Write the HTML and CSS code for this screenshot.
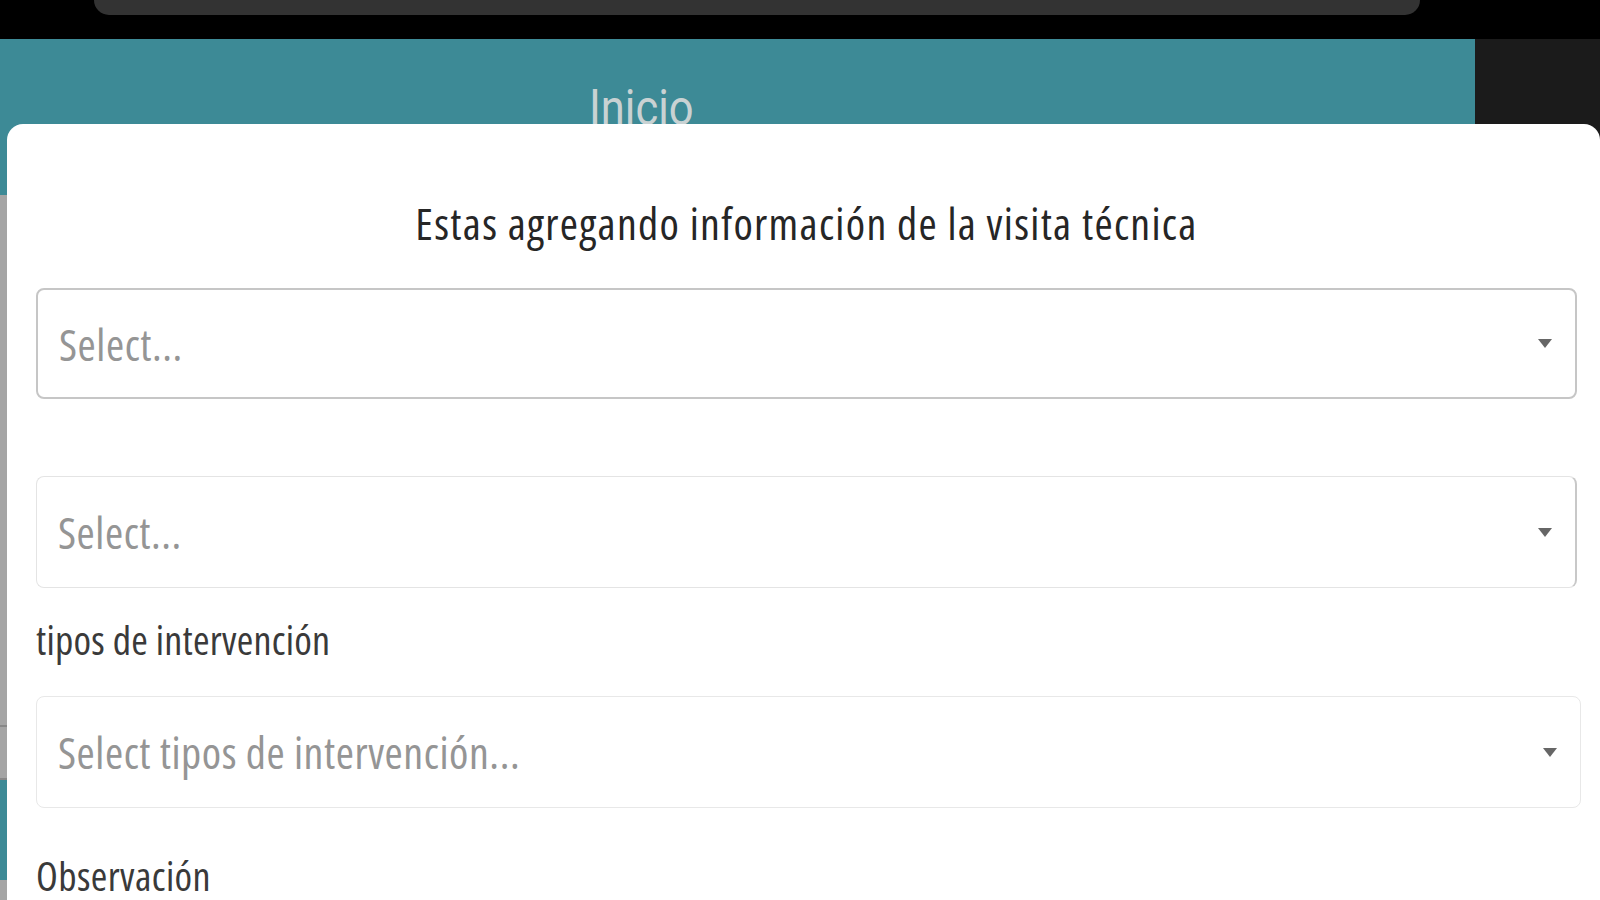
FILE: index.html
```html
<!DOCTYPE html>
<html lang="es">
<head>
    <meta charset="UTF-8">
    <title>Inicio - Visita técnica</title>
    <link rel="stylesheet" href="styles.css">
</head>
<body>
    <div class="topbar">
        <div class="notch"></div>
    </div>
    <div class="app">
        <div class="main">
            <header class="main-header">
                <h1>Inicio</h1>
            </header>
            <div class="main-content">
                <div class="row row-tall"></div>
                <div class="row"></div>
                <div class="row row-teal"></div>
            </div>
        </div>
        <div class="side"></div>
    </div>

    <!-- Modal sheet -->
    <div class="modal">
        <h2 class="modal-title">Estas agregando información de la visita técnica</h2>

        <div class="select select-strong">
            <span class="placeholder">Select...</span>
            <span class="caret"></span>
        </div>

        <div class="select select-second">
            <span class="placeholder">Select...</span>
            <span class="caret"></span>
        </div>

        <label class="field-label">tipos de intervención</label>
        <div class="select select-light">
            <span class="placeholder">Select tipos de intervención...</span>
            <span class="caret"></span>
        </div>

        <label class="field-label field-label-obs">Observación</label>
    </div>
</body>
</html>
```

FILE: styles.css
```css
/* Basic Reset */
html,
body {
    margin: 0;
    padding: 0;
    height: 100%;
    overflow: hidden;
    background-color: #000000;
    font-family: 'Open Sans', 'Noto Sans', sans-serif;
    font-stretch: 75%;
}

/* Phone status area */
.topbar {
    height: 39px;
    background-color: #000000;
}

.notch {
    margin-left: 94px;
    width: 1326px;
    height: 15px;
    background-color: #333333;
    border-radius: 0 0 22px 22px;
}

/* Page behind the sheet */
.app {
    display: flex;
    height: 861px;
}

.main {
    width: 1475px;
    display: flex;
    flex-direction: column;
}

.main-header {
    height: 156px;
    background-color: #3d8a96;
    padding-left: 589px;
}

.main-header h1 {
    margin: 0;
    padding-top: 40px;
    font-family: Roboto, 'Open Sans', sans-serif;
    font-stretch: normal;
    font-weight: 400;
    font-size: 50px;
    color: #c9d2d3;
    transform: scaleX(0.87);
    transform-origin: left;
}

.main-content {
    flex-grow: 1;
    display: flex;
    flex-direction: column;
    background-color: #a5a5a5;
}

.row {
    height: 51px;
    background-color: #a5a5a5;
    border-bottom: 2px solid #888888;
}

.row-tall {
    height: 530px;
}

.row-teal {
    height: 100px;
    background-color: #3d8a96;
    border-bottom: none;
}

.side {
    flex-grow: 1;
    background-color: #1b1b1b;
}

/* Modal sheet */
.modal {
    position: absolute;
    top: 124px;
    left: 7px;
    right: 0;
    bottom: 0;
    background-color: #ffffff;
    border-radius: 16px 16px 0 0;
    padding: 0 23px 0 29px;
}

.modal-title {
    margin: 71px 0 37px;
    text-align: center;
    font-size: 44px;
    font-weight: 400;
    letter-spacing: 1.3px;
    line-height: 56px;
    color: #262626;
}

/* Select fields */
.select {
    height: 110px;
    border: 1px solid #dedede;
    border-radius: 8px;
    display: flex;
    align-items: center;
    justify-content: space-between;
    padding: 0 23px 0 21px;
}

.select-strong {
    border: 2px solid #c6c6c6;
    height: 107px;
}

.select-second {
    margin-top: 77px;
    border-color: #e4e4e4;
    border-right: 2px solid #c8c8c8;
}

.select-light {
    border-color: #e8e8e8;
    margin-right: -4px;
}

.placeholder {
    font-size: 44px;
    letter-spacing: 0.55px;
    color: #959595;
}

.caret {
    width: 0;
    height: 0;
    border-left: 7px solid transparent;
    border-right: 7px solid transparent;
    border-top: 9px solid #666666;
}

/* Labels */
.field-label {
    display: block;
    margin: 24px 0 28px;
    font-size: 40px;
    letter-spacing: 0.25px;
    line-height: 56px;
    color: #3a3a3a;
}

.field-label-obs {
    margin-top: 40px;
    letter-spacing: 0.4px;
}
```
